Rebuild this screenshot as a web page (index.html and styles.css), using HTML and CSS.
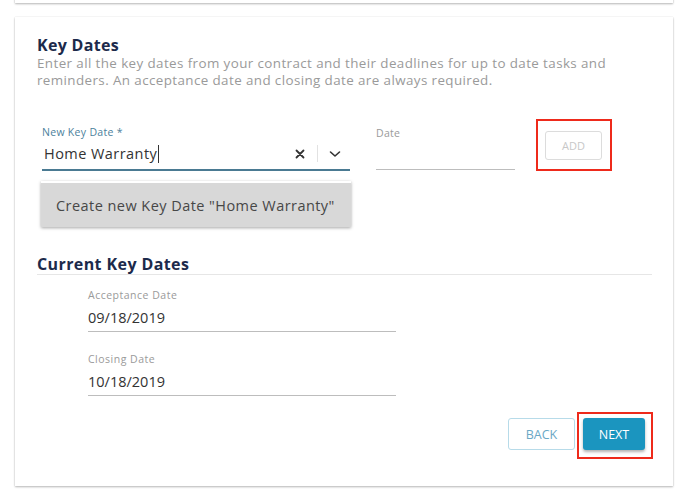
FILE: index.html
```html
<!DOCTYPE html>
<html>
<head>
<meta charset="utf-8">
<link rel="stylesheet" href="styles.css">
</head>
<body>
<div class="page">
  <div class="card card-top"></div>
  <div class="card card-main">
    <h2 class="title">Key Dates</h2>
    <p class="desc">Enter all the key dates from your contract and their deadlines for up to date tasks and reminders. An acceptance date and closing date are always required.</p>

    <div class="add-row">
      <div class="field field-key">
        <label class="lbl lbl-active">New Key Date *</label>
        <div class="input input-active">
          <span class="val">Home Warranty<span class="caret"></span></span>
          <span class="icons">
            <svg class="ico-x" width="10" height="10" viewBox="0 0 10 10"><path d="M1.5 1.5 L8.5 8.5 M8.5 1.5 L1.5 8.5" stroke="#333" stroke-width="1.8" stroke-linecap="round"/></svg>
            <span class="sep"></span>
            <svg class="ico-chev" width="12" height="8" viewBox="0 0 12 8"><path d="M1.5 2 L6 6 L10.5 2" stroke="#333" stroke-width="1.6" fill="none" stroke-linecap="round" stroke-linejoin="round"/></svg>
          </span>
        </div>
        <div class="menu">
          <div class="option">Create new Key Date "Home Warranty"</div>
        </div>
      </div>
      <div class="field field-date">
        <label class="lbl">Date</label>
        <div class="input"></div>
      </div>
      <div class="hl hl-add">
        <button class="btn-add">ADD</button>
      </div>
    </div>

    <h3 class="subtitle">Current Key Dates</h3>
    <div class="list">
      <div class="item">
        <div class="lbl">Acceptance Date</div>
        <div class="item-val">09/18/2019</div>
      </div>
      <div class="item">
        <div class="lbl">Closing Date</div>
        <div class="item-val">10/18/2019</div>
      </div>
    </div>

    <div class="actions">
      <button class="btn-back">BACK</button>
      <div class="hl hl-next">
        <button class="btn-next">NEXT</button>
      </div>
    </div>
  </div>
</div>
</body>
</html>
```

FILE: styles.css
```css
* { box-sizing: border-box; }
html, body { margin: 0; padding: 0; background: #fff; }
body { font-family: "Open Sans", Lato, sans-serif; width: 688px; height: 497px; overflow: hidden; }
.page { padding: 0 15px; display: flex; flex-direction: column; }
.card { background: #fff; box-shadow: 0 1px 2px rgba(0,0,0,0.28), 0 0 1px rgba(0,0,0,0.12); width: 658px; }
.card-top { margin-top: -10px; height: 13px; }
.card-main { margin-top: 14px; height: 469px; padding: 18px 22px 0 22px; display: flex; flex-direction: column; }
.title { margin: 0; font-size: 16px; font-weight: 700; color: #1c2a4b; line-height: 20px; letter-spacing: 0.3px; }
.desc { margin: 0; font-size: 13.4px; color: #9a9a9a; line-height: 17px; width: 580px; letter-spacing: 0.4px; }

.add-row { display: flex; align-items: flex-start; margin-top: 37px; height: 128px; }
.field { display: flex; flex-direction: column; }
.field-key { width: 308px; margin-left: 5px; position: relative; }
.field-date { width: 139px; margin-left: 26px; margin-top: 1px; }
.lbl { font-size: 10.5px; color: #9a9a9a; line-height: 13px; letter-spacing: 0.3px; }
.lbl-active { color: #4c7f9c; }
.input { height: 30px; border-bottom: 1px solid #bdbdbd; display: flex; align-items: center; justify-content: space-between; }
.field-date .input { height: 30px; }
.input-active { border-bottom: 2px solid #4a7a92; padding-left: 2px; height: 32px; padding-bottom: 1px; }
.val { font-size: 14.5px; color: #333; display: flex; align-items: center; letter-spacing: 0.45px; }
.caret { display: inline-block; width: 1px; height: 18px; background: #333; margin-left: 1px; }
.icons { display: flex; align-items: center; margin-right: 9px; }
.sep { width: 1px; height: 17px; background: #e2e2e2; margin: 0 11px 0 12px; }
.menu { position: absolute; left: -1px; top: 55px; width: 310px; background: #fff; padding-top: 2px; box-shadow: 0 1px 3px rgba(0,0,0,0.35); }
.option { background: #d8d8d8; height: 44px; display: flex; align-items: center; padding-left: 15px; font-size: 14.5px; color: #474747; letter-spacing: 0.45px; }

.hl { border: 2px solid #ee2a1b; display: flex; }
.hl-add { width: 76px; height: 52px; margin-left: 21px; margin-top: -7px; padding: 10px 0 0 7px; }
.btn-add { width: 57px; height: 29px; border: 1px solid #dcdcdc; border-radius: 3px; background: #fff; color: #c8c8c8; font-family: inherit; font-size: 11px; padding: 0; }

.subtitle { margin: 0; font-size: 16px; font-weight: 700; color: #1c2a4b; line-height: 20px; border-bottom: 1px solid #e6e6e6; width: 615px; letter-spacing: 0.4px; }
.list { margin-left: 51px; margin-top: 14px; display: flex; flex-direction: column; gap: 21px; width: 308px; }
.item { border-bottom: 1px solid #bdbdbd; height: 43px; }
.item .lbl { font-size: 10.5px; line-height: 13px; letter-spacing: 0.5px; }
.item-val { font-size: 14.5px; color: #333; margin-top: 6px; line-height: 20px; }

.actions { display: flex; justify-content: flex-end; align-items: flex-start; margin-top: 16px; width: 616px; }
.btn-back { width: 67px; height: 32px; border: 1px solid #b7dbe9; border-radius: 3px; background: #fff; color: #6aa8c6; font-family: inherit; font-size: 12.5px; margin-right: 2px; margin-top: 6px; padding: 0; }
.hl-next { width: 76px; height: 47px; padding: 4px 0 0 4px; }
.btn-next { width: 62px; height: 32px; border: none; border-radius: 3px; background: #1b95bf; color: #fff; font-family: inherit; font-size: 12.5px; box-shadow: 0 2px 3px rgba(0,0,0,0.3); padding: 0; }
```
